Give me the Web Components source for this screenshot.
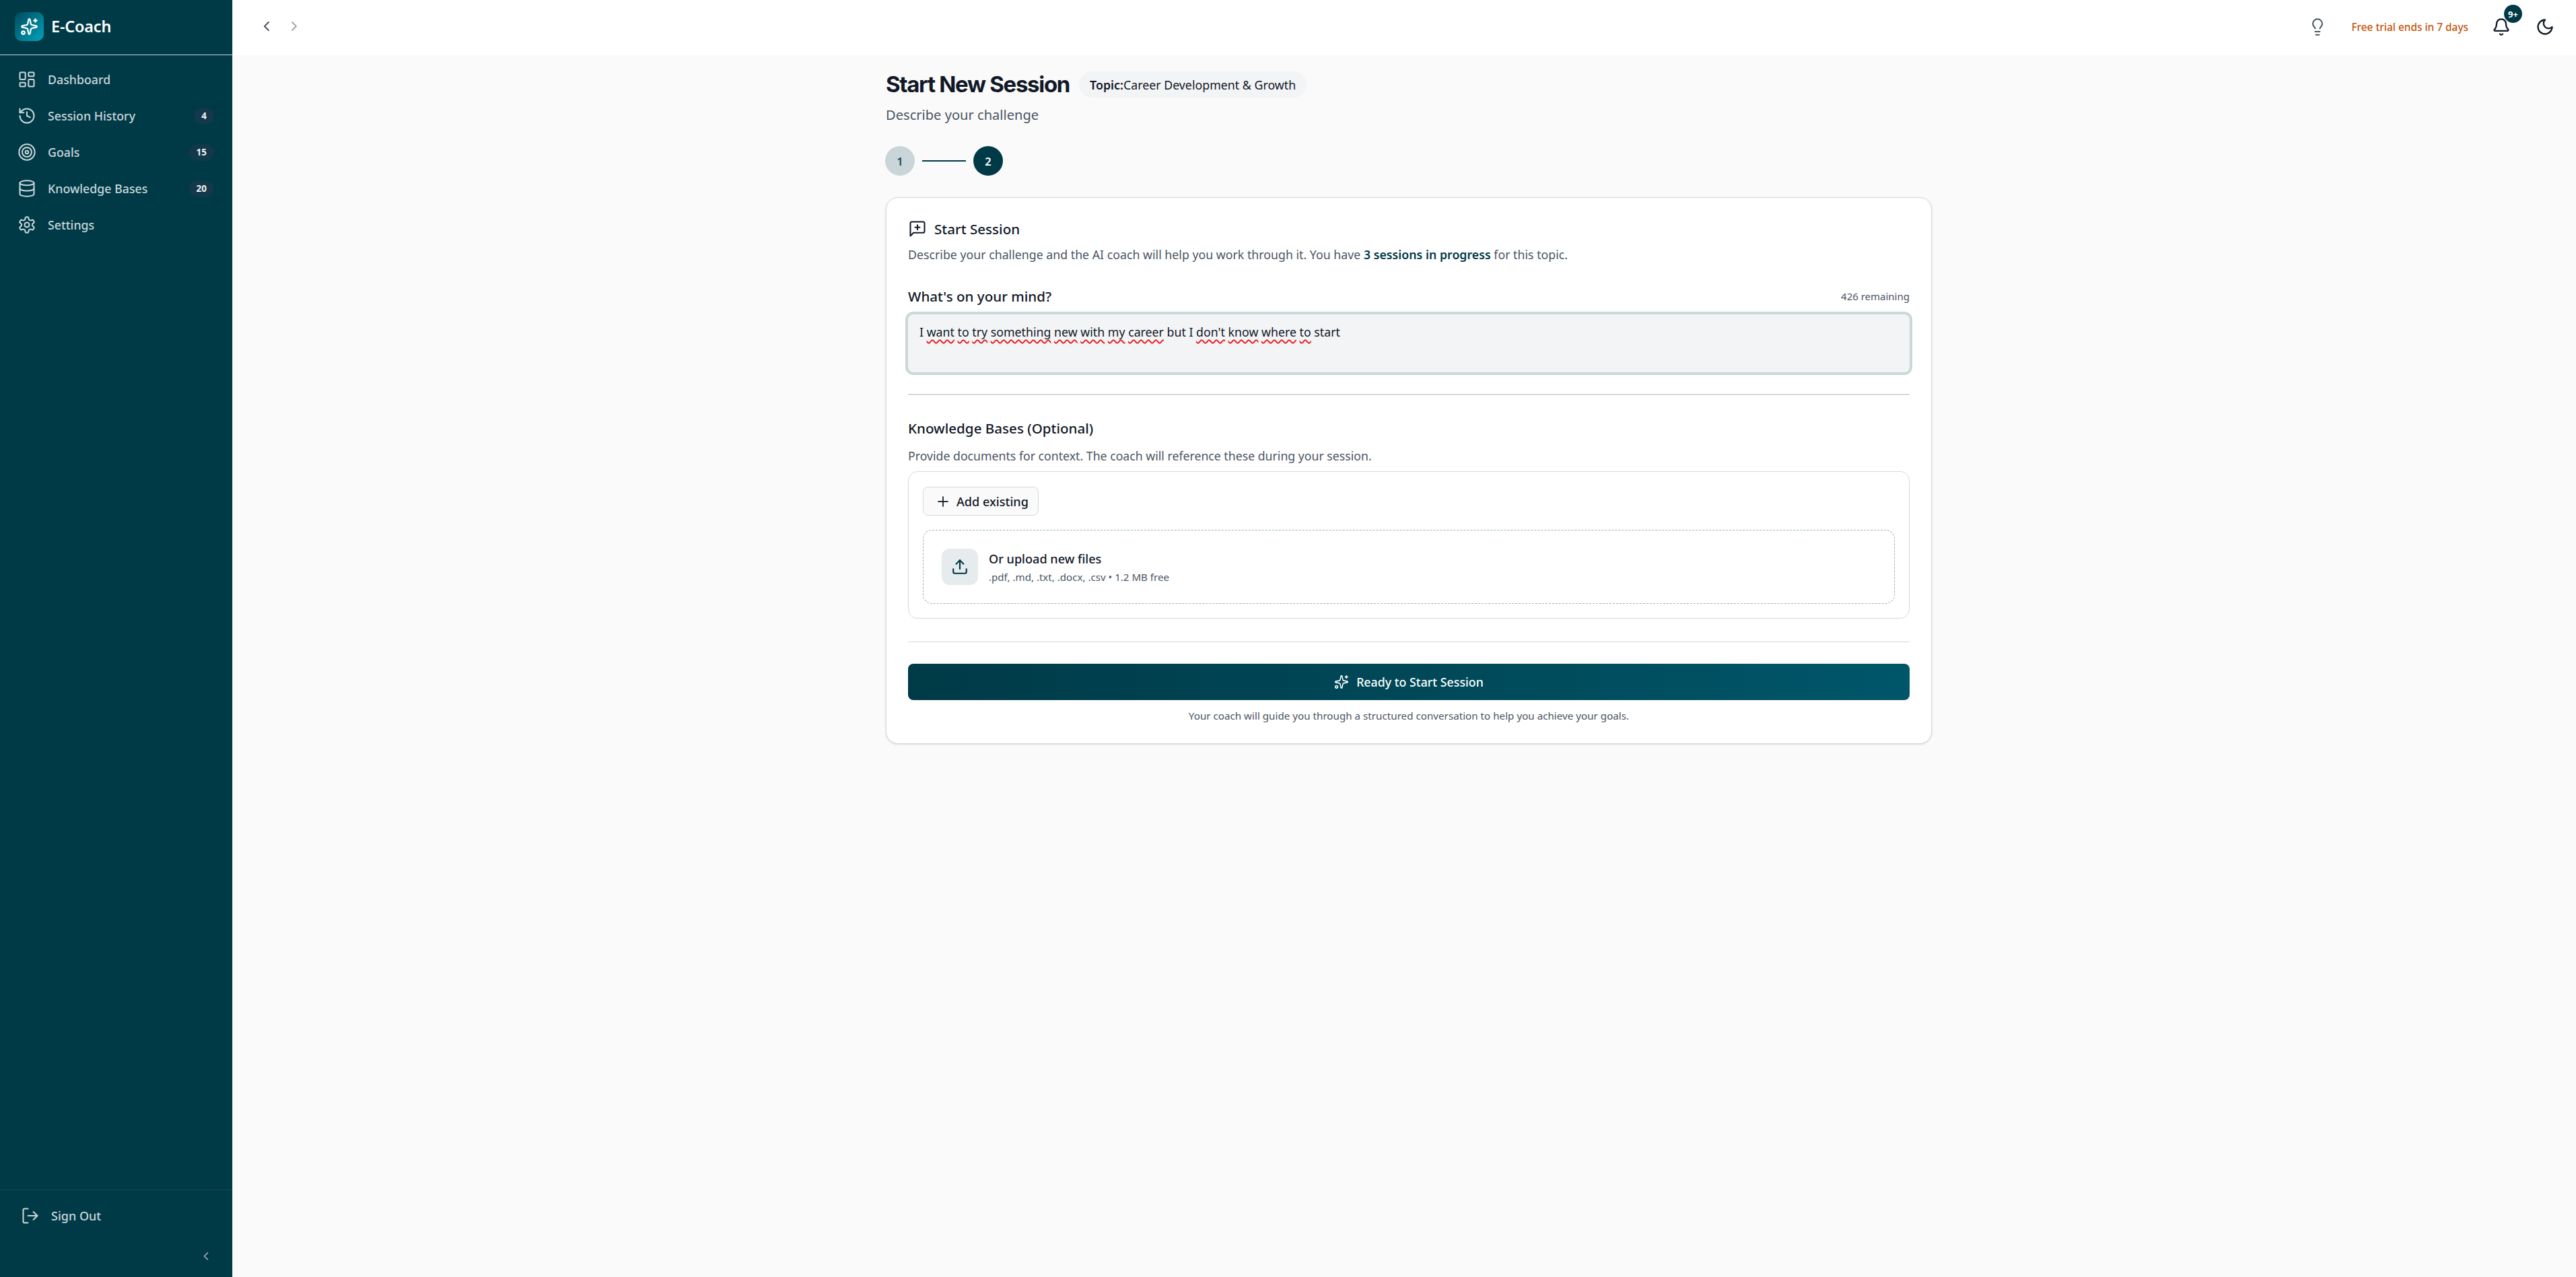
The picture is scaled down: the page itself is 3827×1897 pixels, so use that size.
<!DOCTYPE html>
<html lang="en"><head><meta charset="utf-8"><title>E-Coach</title>
<style>
html,body{margin:0;height:100%;background:#fafafa;font-family:"Noto Sans","Open Sans",sans-serif;color:#111827}
body{overflow:hidden}
</style></head><body>
<app-shell>
  <app-sidebar slot="side">
    <nav-item icon="dash" slot="nav">Dashboard</nav-item>
    <nav-item icon="history" badge="4" slot="nav">Session History</nav-item>
    <nav-item icon="target" badge="15" slot="nav">Goals</nav-item>
    <nav-item icon="db" badge="20" slot="nav">Knowledge Bases</nav-item>
    <nav-item icon="gear" slot="nav">Settings</nav-item>
  </app-sidebar>
  <top-bar slot="top"></top-bar>
  <session-page slot="main"></session-page>
</app-shell>
<script>
const P={
 dash:'<rect x="3" y="3" width="7" height="9" rx="1"/><rect x="14" y="3" width="7" height="5" rx="1"/><rect x="14" y="12" width="7" height="9" rx="1"/><rect x="3" y="16" width="7" height="5" rx="1"/>',
 history:'<path d="M3 12a9 9 0 1 0 9-9 9.75 9.75 0 0 0-6.74 2.74L3 8"/><path d="M3 3v5h5"/><path d="M12 7v5l4 2"/>',
 target:'<circle cx="12" cy="12" r="10"/><circle cx="12" cy="12" r="6"/><circle cx="12" cy="12" r="2"/>',
 db:'<ellipse cx="12" cy="5" rx="9" ry="3"/><path d="M3 5V19A9 3 0 0 0 21 19V5"/><path d="M3 12A9 3 0 0 0 21 12"/>',
 gear:'<path d="M12.22 2h-.44a2 2 0 0 0-2 2v.18a2 2 0 0 1-1 1.73l-.43.25a2 2 0 0 1-2 0l-.15-.08a2 2 0 0 0-2.73.73l-.22.38a2 2 0 0 0 .73 2.73l.15.1a2 2 0 0 1 1 1.72v.51a2 2 0 0 1-1 1.74l-.15.09a2 2 0 0 0-.73 2.73l.22.38a2 2 0 0 0 2.73.73l.15-.08a2 2 0 0 1 2 0l.43.25a2 2 0 0 1 1 1.73V20a2 2 0 0 0 2 2h.44a2 2 0 0 0 2-2v-.18a2 2 0 0 1 1-1.73l.43-.25a2 2 0 0 1 2 0l.15.08a2 2 0 0 0 2.73-.73l.22-.39a2 2 0 0 0-.73-2.73l-.15-.08a2 2 0 0 1-1-1.74v-.5a2 2 0 0 1 1-1.74l.15-.09a2 2 0 0 0 .73-2.73l-.22-.38a2 2 0 0 0-2.73-.73l-.15.08a2 2 0 0 1-2 0l-.43-.25a2 2 0 0 1-1-1.73V4a2 2 0 0 0-2-2z"/><circle cx="12" cy="12" r="3"/>',
 logout:'<path d="M9 21H5a2 2 0 0 1-2-2V5a2 2 0 0 1 2-2h4"/><path d="m16 17 5-5-5-5"/><path d="M21 12H9"/>',
 left:'<path d="m15 18-6-6 6-6"/>',right:'<path d="m9 18 6-6-6-6"/>',
 bulb:'<path d="M15 14c.2-1 .7-1.7 1.5-2.5 1-.9 1.5-2.2 1.5-3.5A6 6 0 0 0 6 8c0 1 .2 2.2 1.5 3.5.7.7 1.3 1.5 1.5 2.5"/><path d="M9 18h6"/><path d="M10 22h4"/>',
 bell:'<path d="M10.268 21a2 2 0 0 0 3.464 0"/><path d="M3.262 15.326A1 1 0 0 0 4 17h16a1 1 0 0 0 .74-1.673C19.41 13.956 18 12.499 18 8A6 6 0 0 0 6 8c0 4.499-1.411 5.956-2.738 7.326"/>',
 moon:'<path d="M12 3a6 6 0 0 0 9 9 9 9 0 1 1-9-9Z"/>',
 chatplus:'<path d="M21 15a2 2 0 0 1-2 2H7l-4 4V5a2 2 0 0 1 2-2h14a2 2 0 0 1 2 2z"/><path d="M12 7v6"/><path d="M9 10h6"/>',
 plus:'<path d="M5 12h14"/><path d="M12 5v14"/>',
 upload:'<path d="M21 15v4a2 2 0 0 1-2 2H5a2 2 0 0 1-2-2v-4"/><path d="m17 8-5-5-5 5"/><path d="M12 3v12"/>',
 spark:'<path d="M11.017 2.814a1 1 0 0 1 1.966 0l1.051 5.558a2 2 0 0 0 1.594 1.594l5.558 1.051a1 1 0 0 1 0 1.966l-5.558 1.051a2 2 0 0 0-1.594 1.594l-1.051 5.558a1 1 0 0 1-1.966 0l-1.051-5.558a2 2 0 0 0-1.594-1.594l-5.558-1.051a1 1 0 0 1 0-1.966l5.558-1.051a2 2 0 0 0 1.594-1.594z"/><path d="M20 2v4"/><path d="M22 4h-4"/><circle cx="4" cy="20" r="2"/>'
};
const ic=(n,s,c,w=2)=>`<svg xmlns="http://www.w3.org/2000/svg" width="${s}" height="${s}" viewBox="0 0 24 24" fill="none" stroke="${c}" stroke-width="${w}" stroke-linecap="round" stroke-linejoin="round" style="display:block;flex:none">${P[n]}</svg>`;
class Base extends HTMLElement{
  connectedCallback(){ if(!this.shadowRoot){this.attachShadow({mode:'open'}).innerHTML=this.html();} }
}
customElements.define('app-shell',class extends Base{html(){return `<style>
:host{display:flex;height:100vh;width:100%}
.r{flex:1;min-width:0;display:flex;flex-direction:column}
.m{flex:1;min-height:0}
</style><slot name="side"></slot><div class="r"><slot name="top"></slot><div class="m"><slot name="main"></slot></div></div>`}});
customElements.define('app-sidebar',class extends Base{html(){return `<style>
:host{display:flex;flex-direction:column;flex:none;width:345px;box-sizing:content-box;height:100%;background:#003a47;border-right:1px solid #dfe3e6;color:#fff}
.logo{height:81px;border-bottom:1px solid #c9d5d9;display:flex;align-items:center;padding-left:22px;gap:11px;box-sizing:content-box}
.tile{width:43px;height:43px;border-radius:10px;background:linear-gradient(135deg,#004a5c,#00a3bb);display:flex;align-items:center;justify-content:center;margin-top:-3px}
.name{font-size:23.5px;font-weight:600;margin-top:-3px;letter-spacing:-.2px}
nav{flex:1;display:flex;flex-direction:column;padding-top:9px}
.out{border-top:1px solid #0f4a58;height:130px;box-sizing:border-box}
.so{display:flex;align-items:center;gap:17px;padding:24px 0 0 31px;color:#c9d6da;font-size:18px;font-weight:500;line-height:28px}
.col{display:flex;justify-content:flex-end;padding:36px 29px 0 0}
</style><div class="logo"><div class="tile">${ic('spark',27,'#fff',2)}</div><div class="name">E-Coach</div></div>
<nav><slot name="nav"></slot></nav>
<div class="out"><div class="so">${ic('logout',28,'#c9d6da',1.75)}<span>Sign Out</span></div><div class="col">${ic('left',20,'#9fb6bd',2)}</div></div>`}});
customElements.define('nav-item',class extends Base{html(){const b=this.getAttribute('badge');return `<style>
:host{display:flex;align-items:center;height:54px;padding:0 27px 0 26px;color:#c9d6da;font-size:17.8px;font-weight:500;gap:17px}
.t{flex:1;margin-top:-1px}
.b{height:25px;line-height:25px;border-radius:13px;background:#12384a;color:#eef3f5;font-size:13.5px;font-weight:700;padding:0 11px;text-align:center}
</style>${ic(this.getAttribute('icon'),28,'#c9d6da',1.75)}<span class="t"><slot></slot></span>${b?`<span class="b">${b}</span>`:''}`}});
customElements.define('top-bar',class extends Base{html(){return `<style>
:host{display:flex;align-items:center;height:82px;flex:none;background:#fff;padding:0 32px 2px 38px;box-sizing:border-box}
.nav{display:flex;gap:17px;margin-top:-2px}
.sp{flex:1}
.trial{font-size:15.4px;font-weight:500;color:#c2540a;margin:0 35px 0 36px}
.bell{position:relative;width:28px;height:28px;margin-right:37px}
.n{position:absolute;left:18px;top:-19px;width:27px;height:27px;border-radius:50%;background:#003a47;color:#fff;font-size:13px;font-weight:700;display:flex;align-items:center;justify-content:center}
</style><div class="nav">${ic('left',24,'#4b5563')}${ic('right',24,'#a4a9b2')}</div><div class="sp"></div>
<div>${ic('bulb',28,'#4b5563',1.75)}</div><span class="trial">Free trial ends in 7 days</span>
<div class="bell">${ic('bell',28,'#111827',2)}<span class="n">9+</span></div>
<div>${ic('moon',28,'#111827',2)}</div>`}});
customElements.define('step-dots',class extends Base{html(){return `<style>
:host{display:flex;align-items:center;gap:11px}
.c{width:44px;height:44px;border-radius:50%;display:flex;align-items:center;justify-content:center;font-size:16.5px;font-weight:600}
.a{background:#c9d5d8;color:#1f4a56}.b{background:#003a47;color:#fff}
.l{width:65px;height:2px;background:#003a47}
</style><div class="c a">1</div><div class="l"></div><div class="c b">2</div>`}});
customElements.define('kb-panel',class extends Base{html(){return `<style>
:host{display:block;border:1px solid #d5d9df;border-radius:14px;padding:22px 21px 20px;height:219px;box-sizing:border-box}
.add{display:inline-flex;align-items:center;gap:8px;height:43px;width:172px;box-sizing:border-box;border:1px solid #d5d9df;border-radius:8px;background:#fafafa;padding-left:17px;font-size:18.1px;font-weight:500;color:#111827}
.drop{margin-top:21px;height:110px;box-sizing:border-box;border:1px dashed #9db3b9;border-radius:14px;display:flex;align-items:center;padding-left:27px;gap:16px}
.tile{width:54px;height:54px;border-radius:12px;background:#e6ebed;display:flex;align-items:center;justify-content:center}
.h{font-size:18.1px;font-weight:500;color:#111827;line-height:24px}
.s{font-size:15.1px;color:#4b5563;line-height:20px;margin-top:5px}
</style><div class="add">${ic('plus',24,'#111827',1.75)}<span>Add existing</span></div>
<div class="drop"><div class="tile">${ic('upload',26,'#003a47',2)}</div><div><div class="h">Or upload new files</div><div class="s">.pdf, .md, .txt, .docx, .csv • 1.2 MB free</div></div></div>`}});
customElements.define('spell-text',class extends Base{html(){
 const w=t=>`<span class="w">${t}</span>`;
 return `<style>:host{display:block}.w{text-decoration:underline wavy #e8141c 1.5px;text-underline-offset:4px;text-decoration-skip-ink:none}</style>I ${w('want')} ${w('to')} ${w('try')} ${w('something')} ${w('new')} ${w('with')} ${w('my')} ${w('career')} but I ${w("don't")} ${w('know')} ${w('where')} ${w('to')} start`}});
customElements.define('session-card',class extends Base{html(){return `<style>
:host{display:block;background:#fff;border:1px solid #d5d9df;border-radius:18px;box-shadow:0 1px 3px rgba(0,0,0,.14);padding:32px 32px 0;height:812px;box-sizing:border-box;color:#111827}
.title{display:flex;align-items:center;gap:11px;height:28px;font-size:20.6px;font-weight:500}
.desc{margin-top:12px;font-size:17.75px;line-height:24px;color:#4b5563}
.desc b{font-weight:600;color:#003a47}
.lab{display:flex;justify-content:space-between;align-items:center;height:28px;margin-top:36px}
.lab b{font-size:20.6px;font-weight:500}
.lab span{font-size:15px;color:#4b5563}
.ta{margin-top:13px;height:86px;box-sizing:border-box;background:#f3f4f6;border-radius:8px;box-shadow:0 0 0 4px #cbd7d9;padding:14px 17px;font-size:17.75px;line-height:24px;color:#111827}
.hr{height:2px;background:#d5d9df;margin-top:32px}
.hr.t{height:1px;margin-top:34px;background:#d9d9d9}
h3{margin:33px 0 0;font-size:20.6px;font-weight:500;line-height:32px}
.desc2{margin-top:13px;font-size:17.7px;line-height:24px;color:#4b5563}
kb-panel{margin-top:11px}
.go{margin-top:32px;height:54px;border-radius:8px;background:linear-gradient(90deg,#003a47,#005669);color:#fff;display:flex;align-items:center;justify-content:center;gap:11px;font-size:17.8px;font-weight:500}
.foot{margin-top:12px;text-align:center;font-size:15.2px;line-height:22px;color:#4b5563}
</style>
<div class="title">${ic('chatplus',28,'#111827',1.75)}<span>Start Session</span></div>
<div class="desc">Describe your challenge and the AI coach will help you work through it. You have <b>3 sessions in progress</b> for this topic.</div>
<div class="lab"><b>What's on your mind?</b><span>426 remaining</span></div>
<div class="ta"><spell-text></spell-text></div>
<div class="hr"></div>
<h3>Knowledge Bases (Optional)</h3>
<div class="desc2">Provide documents for context. The coach will reference these during your session.</div>
<kb-panel></kb-panel>
<div class="hr t"></div>
<div class="go">${ic('spark',22,'#fff',1.75)}<span>Ready to Start Session</span></div>
<div class="foot">Your coach will guide you through a structured conversation to help you achieve your goals.</div>`}});
customElements.define('session-page',class extends Base{html(){return `<style>
:host{display:block;padding:24px 0 0 970px;width:1554px}
.head{display:flex;align-items:center;height:39px;gap:14px}
h1{margin:0;font:700 33px/39px Inter,"Noto Sans",sans-serif;letter-spacing:-1.3px;color:#111827}
.chip{display:flex;height:39px;align-items:center;padding:0 16px;border-radius:20px;background:#f3f4f6;font-size:17.8px;color:#111827}
.chip b{font-weight:600}
.sub{margin-top:12px;font-size:20.1px;line-height:28px;color:#4b5563}
step-dots{margin:32px 0 0 -1px}
session-card{margin-top:32px}
</style><div class="head"><h1>Start New Session</h1><div class="chip"><b>Topic:</b><span>Career Development &amp; Growth</span></div></div>
<div class="sub">Describe your challenge</div><step-dots></step-dots><session-card></session-card>`}});
</script>
</body></html>
